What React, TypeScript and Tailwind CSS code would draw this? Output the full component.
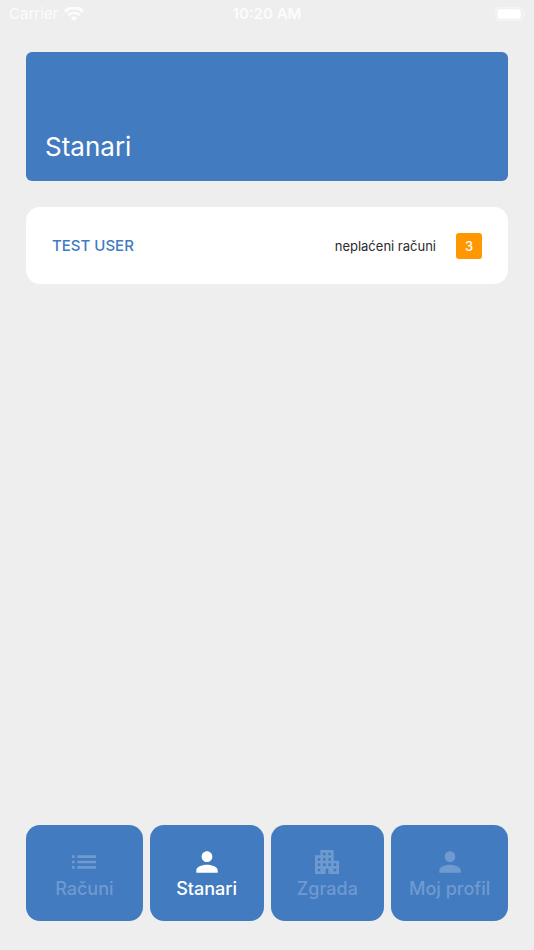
import { useState } from 'react';
import type { IconType } from 'react-icons';
import { MdApartment, MdList, MdPerson } from 'react-icons/md';

const tabs: { id: string; label: string; icon: IconType }[] = [
  { id: 'bills', label: 'Računi', icon: MdList },
  { id: 'tenants', label: 'Stanari', icon: MdPerson },
  { id: 'building', label: 'Zgrada', icon: MdApartment },
  { id: 'profile', label: 'Moj profil', icon: MdPerson }
];

const tenants = [{ name: 'TEST USER', unpaid: 3 }];

export default function App() {
  const [active, setActive] = useState('tenants');

  return (
    <div className="flex min-h-screen flex-col bg-[#eeeeee] font-['Inter','Liberation_Sans',sans-serif]">
      <StatusBar />

      <main className="flex-1 px-[26px] pt-6">
        <header className="flex h-[129px] items-end rounded-md bg-[#427bc0] px-[19px] pb-4">
          <h1 className="text-[26px] leading-9 text-white">Stanari</h1>
        </header>

        <ul className="mt-[26px] space-y-4">
          {tenants.map((t) => (
            <TenantCard key={t.name} name={t.name} unpaid={t.unpaid} />
          ))}
        </ul>
      </main>

      <nav className="grid grid-cols-[117fr_114fr_114fr_117fr] gap-[7px] px-[26px] pb-[29px]">
        {tabs.map(({ id, label, icon: Icon }) => (
          <button
            key={id}
            type="button"
            onClick={() => setActive(id)}
            aria-current={active === id ? 'page' : undefined}
            className={`flex h-24 flex-col items-center justify-center rounded-[14px] bg-[#427bc0] text-lg font-medium leading-[22px] ${
              active === id ? 'text-white' : 'text-[#6f9ad0]'
            }`}
          >
            <Icon className="size-8" aria-hidden />
            <span className="whitespace-nowrap">{label}</span>
          </button>
        ))}
      </nav>
    </div>
  );
}

function TenantCard({ name, unpaid }: { name: string; unpaid: number }) {
  return (
    <li className="flex h-[77px] items-center rounded-[14px] bg-white px-[26px]">
      <span className="flex-1 text-[15px] font-medium leading-6 text-[#427bc0]">{name}</span>
      <span className="text-[13px] leading-6 text-[#2b2b2b]">neplaćeni računi</span>
      <span className="ml-5 flex size-[26px] items-center justify-center rounded-[3px] bg-[#ff9800] text-[13px] font-medium leading-6 text-white">
        {unpaid}
      </span>
    </li>
  );
}

function StatusBar() {
  return (
    <div className="grid h-7 grid-cols-3 items-center px-2 text-[15px] leading-7 text-[#fcfcfc]">
      <div className="flex items-center gap-[6px] pl-px">
        <span>Carrier</span>
        <svg viewBox="0 0 20 15" className="h-[15px] w-5" fill="none" stroke="currentColor" aria-hidden>
          <path d="M1 4.5a12.8 12.8 0 0 1 18 0" strokeWidth="3.2" />
          <path d="M4.1 8.3a8.5 8.5 0 0 1 11.8 0" strokeWidth="2.9" />
          <path d="M10 13.9 6.7 10.8a4.8 4.8 0 0 1 6.6 0z" fill="currentColor" stroke="none" />
        </svg>
      </div>
      <span className="text-center font-semibold">10:20 AM</span>
      <svg viewBox="0 0 31 14" className="h-[14px] w-[31px] justify-self-end" aria-hidden>
        <rect x="0.8" y="0.6" width="26.8" height="12.8" rx="4" fill="none" stroke="#f5f5f5" strokeWidth="1.2" />
        <rect x="2.6" y="2.2" width="23.2" height="9.6" rx="2.4" fill="#ffffff" />
        <path d="M29 4.8a2.4 2.4 0 0 1 0 4.4z" fill="#f5f5f5" />
      </svg>
    </div>
  );
}
